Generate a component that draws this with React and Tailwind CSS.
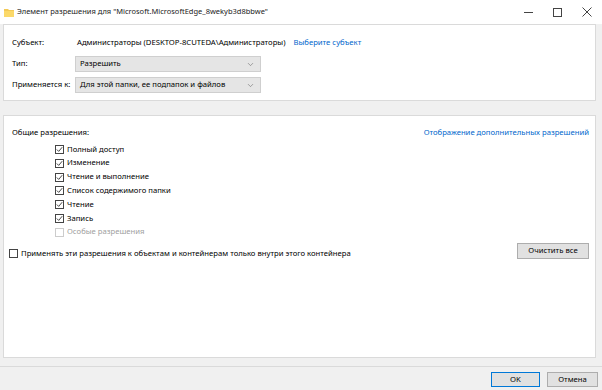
import { ChevronDown } from "lucide-react";

const perms = [
  { label: "Полный доступ", checked: true },
  { label: "Изменение", checked: true },
  { label: "Чтение и выполнение", checked: true },
  { label: "Список содержимого папки", checked: true },
  { label: "Чтение", checked: true },
  { label: "Запись", checked: true },
  { label: "Особые разрешения", checked: false, disabled: true },
];

const Box = ({ checked, disabled }) => (
  <span
    className={`w-[9px] h-[9px] border bg-white flex items-center justify-center shrink-0 ${
      disabled ? "border-[#cccccc]" : "border-[#444444]"
    }`}
  >
    {checked && (
      <svg width="7" height="7" viewBox="0 0 7 7">
        <path d="M0.8 3.5 L2.7 5.4 L6.2 1.2" fill="none" stroke="#333" strokeWidth="0.9" />
      </svg>
    )}
  </span>
);

const Select = ({ value }) => (
  <div className="w-[186px] h-[16px] bg-[#e5e5e5] border border-[#cfcfcf] flex items-center justify-between pl-[4px] pr-[5px]">
    <span>{value}</span>
    <ChevronDown size={9} strokeWidth={1.5} className="text-[#666]" />
  </div>
);

const App = () => {
  return (
    <div className="w-[602px] h-[390px] bg-[#f0f0f0] flex flex-col text-[7.7px] text-black font-['Noto_Sans',sans-serif] overflow-hidden whitespace-nowrap">

      {/* TITLE BAR */}

      <div className="h-[24px] bg-white flex items-center shrink-0">
        <svg width="10" height="9" viewBox="0 0 10 9" className="ml-[4px] mr-[3px]">
          <path d="M0 1 H4 L5 2 H10 V9 H0 Z" fill="#f3c955" />
          <path d="M0 3 H10 V9 H0 Z" fill="#fbd96a" />
        </svg>
        <span className="text-[7.5px] text-[#222]">
          Элемент разрешения для "Microsoft.MicrosoftEdge_8wekyb3d8bbwe"
        </span>
        <div className="ml-auto flex items-center h-full">
          <div className="w-[29px] flex justify-center">
            <div className="w-[9px] h-px bg-[#444]" />
          </div>
          <div className="w-[29px] flex justify-center">
            <div className="w-[9px] h-[9px] border border-[#444]" />
          </div>
          <div className="w-[30px] flex justify-center">
            <svg width="10" height="10" viewBox="0 0 10 10">
              <path d="M0.5 0.5 L9.5 9.5 M9.5 0.5 L0.5 9.5" stroke="#444" strokeWidth="1" />
            </svg>
          </div>
        </div>
      </div>

      {/* SUBJECT PANEL */}

      <div className="mx-[3px] mr-[6px] h-[77px] bg-white border border-[#dadada] pl-[8px] pt-[10px] flex flex-col gap-[5px] shrink-0">
        <div className="flex items-center h-[16px]">
          <span className="w-[65px]">Субъект:</span>
          <span>Администраторы (DESKTOP-8CUTEDA\Администраторы)</span>
          <span className="ml-[8px] text-[#0066cc]">Выберите субъект</span>
        </div>
        <div className="flex items-center">
          <span className="w-[63px]">Тип:</span>
          <Select value="Разрешить" />
        </div>
        <div className="flex items-center">
          <span className="w-[63px]">Применяется к:</span>
          <Select value="Для этой папки, ее подпапок и файлов" />
        </div>
      </div>

      {/* PERMISSIONS PANEL */}

      <div className="mx-[3px] mr-[6px] mt-[14px] h-[243px] bg-white border border-[#dadada] pt-[11px] shrink-0">
        <div className="flex justify-between pl-[8px] pr-[6px]">
          <span>Общие разрешения:</span>
          <span className="text-[#0066cc]">Отображение дополнительных разрешений</span>
        </div>
        <div className="flex flex-col pl-[51px] mt-[4px]">
          {perms.map((p) => (
            <div key={p.label} className="flex items-center gap-[3px] h-[13.8px]">
              <Box checked={p.checked} disabled={p.disabled} />
              <span className={p.disabled ? "text-[#a0a0a0]" : ""}>{p.label}</span>
            </div>
          ))}
        </div>
        <div className="flex items-center justify-between pl-[5px] pr-[6px] mt-[3px]">
          <div className="flex items-center gap-[3px] pt-[6px]">
            <Box checked={false} />
            <span>Применять эти разрешения к объектам и контейнерам только внутри этого контейнера</span>
          </div>
          <button className="w-[72px] h-[16px] bg-[#e1e1e1] border border-[#adadad] text-[7.7px]">
            Очистить все
          </button>
        </div>
      </div>

      {/* FOOTER */}

      <div className="mt-[8px] border-t border-[#dadada] flex-1 flex justify-end items-start gap-[7px] pt-[5px] pr-[4px]">
        <button className="w-[49px] h-[15px] bg-[#e1e1e1] border border-[#0078d7] text-[7.7px]">OK</button>
        <button className="w-[51px] h-[15px] bg-[#e1e1e1] border border-[#adadad] text-[7.7px]">Отмена</button>
      </div>

    </div>
  );
};

export default App;
